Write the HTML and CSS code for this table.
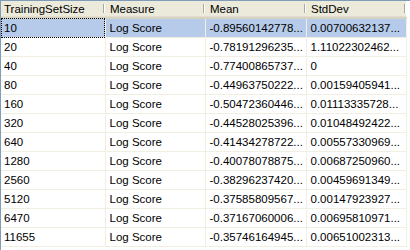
FILE: index.html
```html
<!DOCTYPE html>
<html lang="en">
  <head>
    <meta charset="UTF-8" />
    <title>Results</title>
    <link rel="stylesheet" href="styles.css">
  </head>
  <body>
    <div class="grid">
      <table class="results">
        <colgroup>
          <col class="col-size">
          <col class="col-measure">
          <col class="col-mean">
          <col class="col-stddev">
        </colgroup>
        <thead>
          <tr>
            <th>TrainingSetSize</th>
            <th>Measure</th>
            <th>Mean</th>
            <th>StdDev</th>
          </tr>
        </thead>
        <tbody>
          <tr class="selected">
            <td class="focus">10</td><td>Log Score</td><td>-0.89560142778...</td><td>0.00700632137...</td>
          </tr>
          <tr><td>20</td><td>Log Score</td><td>-0.78191296235...</td><td>1.11022302462...</td></tr>
          <tr><td>40</td><td>Log Score</td><td>-0.77400865737...</td><td>0</td></tr>
          <tr><td>80</td><td>Log Score</td><td>-0.44963750222...</td><td>0.00159405941...</td></tr>
          <tr><td>160</td><td>Log Score</td><td>-0.50472360446...</td><td>0.01113335728...</td></tr>
          <tr><td>320</td><td>Log Score</td><td>-0.44528025396...</td><td>0.01048492422...</td></tr>
          <tr><td>640</td><td>Log Score</td><td>-0.41434278722...</td><td>0.00557330969...</td></tr>
          <tr><td>1280</td><td>Log Score</td><td>-0.40078078875...</td><td>0.00687250960...</td></tr>
          <tr><td>2560</td><td>Log Score</td><td>-0.38296237420...</td><td>0.00459691349...</td></tr>
          <tr><td>5120</td><td>Log Score</td><td>-0.37585809567...</td><td>0.00147923927...</td></tr>
          <tr><td>6470</td><td>Log Score</td><td>-0.37167060006...</td><td>0.00695810971...</td></tr>
          <tr><td>11655</td><td>Log Score</td><td>-0.35746164945...</td><td>0.00651002313...</td></tr>
        </tbody>
      </table>
    </div>
  </body>
</html>
```

FILE: styles.css
```css
:root {
  --border-color: #7f9db9;
  --header-bg: #ebeadb;
  --grid-line: #f1efe2;
  --selected-bg: #b6cbea;
}

html,
body {
  margin: 0;
  height: 100%;
  background: #ffffff;
}

body {
  font-family: "Liberation Sans", Arial, sans-serif;
  font-size: 11.5px;
  color: #000000;
}

.grid {
  height: 250px;
  border-top: 1px solid var(--border-color);
  border-left: 1px solid var(--border-color);
  box-sizing: border-box;
  overflow: hidden;
}

.results {
  border-collapse: collapse;
  table-layout: fixed;
  width: 405px;
}

.col-size { width: 104px; }
.col-measure { width: 100px; }
.col-mean { width: 101px; }
.col-stddev { width: 100px; }

.results th {
  height: 16px;
  padding: 0 0 0 3px;
  font-weight: normal;
  text-align: left;
  background: var(--header-bg);
  border-bottom: 2px solid #d6d2c2;
  box-shadow: inset 0 -1px 0 #e2decd;
  white-space: nowrap;
  position: relative;
}

.results th + th {
  padding-left: 5px;
}

.results th::after {
  content: "";
  position: absolute;
  right: 1px;
  top: 3px;
  bottom: 4px;
  width: 1px;
  background: #aca899;
  box-shadow: 1px 0 0 #ffffff;
}

.results td {
  height: 18px;
  padding: 0 0 0 4px;
  border-right: 1px solid var(--grid-line);
  border-bottom: 1px solid var(--grid-line);
  white-space: nowrap;
  overflow: hidden;
}

.results td:first-child {
  padding-left: 3px;
}

.results tr.selected td {
  background: var(--selected-bg);
}

.results td.focus {
  outline: 1px dotted #000000;
  outline-offset: -1px;
}
```
